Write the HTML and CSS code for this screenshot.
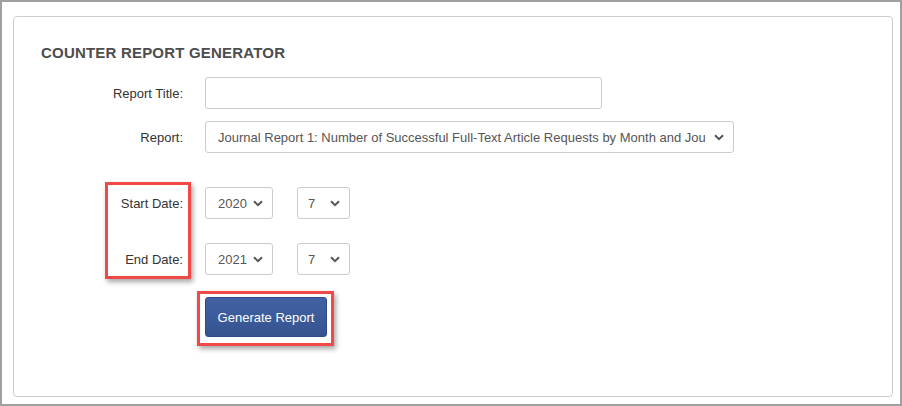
FILE: index.html
```html
<!DOCTYPE html>
<html>
<head>
    <meta charset="UTF-8">
    <title>Counter Report Generator</title>
    <link rel="stylesheet" href="styles.css">
</head>
<body>
    <div class="frame">
        <div class="card">
            <h2 class="title">COUNTER REPORT GENERATOR</h2>
            <form class="form">
                <div class="row">
                    <label class="label" for="title">Report Title:</label>
                    <input class="text-input" type="text" id="title">
                </div>
                <div class="row">
                    <label class="label" for="report">Report:</label>
                    <select class="select report-select" id="report">
                        <option>Journal Report 1: Number of Successful Full-Text Article Requests by Month and Journal</option>
                    </select>
                </div>
                <div class="row row-start">
                    <label class="label">Start Date:</label>
                    <div class="date-pair">
                        <select class="select year-select"><option>2020</option></select>
                        <select class="select month-select"><option>7</option></select>
                    </div>
                </div>
                <div class="row row-end">
                    <label class="label">End Date:</label>
                    <div class="date-pair">
                        <select class="select year-select"><option>2021</option></select>
                        <select class="select month-select"><option>7</option></select>
                    </div>
                </div>
                <div class="row row-button">
                    <span></span>
                    <button type="button" class="btn">Generate Report</button>
                </div>
            </form>
            <!-- annotation boxes drawn over the form -->
            <div class="mark mark-labels"></div>
            <div class="mark mark-button"></div>
        </div>
    </div>
</body>
</html>
```

FILE: styles.css
```css
html, body {
    margin: 0;
    padding: 0;
    background: #ffffff;
}
body {
    font-family: "Liberation Sans", Arial, sans-serif;
    font-size: 13px;
    color: #333333;
}
.frame {
    width: 902px;
    height: 406px;
    box-sizing: border-box;
    border: 2px solid #a0a0a0;
    padding: 14px 0 0 11px;
}
.card {
    position: relative;
    width: 880px;
    height: 381px;
    box-sizing: border-box;
    border: 1px solid #cccccc;
    border-radius: 4px;
    padding: 27px 27px 0 27px;
}
.title {
    margin: 0;
    font-size: 15px;
    line-height: 17px;
    font-weight: bold;
    color: #4d4d4d;
    letter-spacing: 0.2px;
}
.form {
    display: flex;
    flex-direction: column;
    margin-top: 16px;
}
.row {
    display: grid;
    grid-template-columns: 142px auto;
    column-gap: 22px;
    align-items: center;
    justify-items: start;
}
.row + .row {
    margin-top: 12px;
}
.row.row-start {
    margin-top: 34px;
}
.row.row-end {
    margin-top: 24px;
}
.row.row-button {
    margin-top: 22px;
}
.label {
    justify-self: end;
    color: #333333;
}
.text-input {
    width: 397px;
    height: 32px;
    box-sizing: border-box;
    border: 1px solid #cccccc;
    border-radius: 3px;
    padding: 0 12px;
    font-family: inherit;
    font-size: 13px;
}
.select {
    height: 32px;
    box-sizing: border-box;
    border: 1px solid #cccccc;
    border-radius: 3px;
    padding: 0 24px 0 12px;
    font-family: inherit;
    font-size: 13px;
    color: #555555;
    background-color: #ffffff;
    background-image: url("data:image/svg+xml;utf8,<svg xmlns='http://www.w3.org/2000/svg' width='10' height='7' viewBox='0 0 10 7'><path d='M1 1.2 L5 5.2 L9 1.2' fill='none' stroke='%23555555' stroke-width='2'/></svg>");
    background-repeat: no-repeat;
    background-position: right 9px center;
    -webkit-appearance: none;
    appearance: none;
}
.report-select {
    width: 529px;
    padding-right: 28px;
}
.date-pair {
    display: flex;
    gap: 24px;
}
.year-select {
    width: 68px;
}
.month-select {
    width: 53px;
    padding-left: 10px;
}
.btn {
    width: 122px;
    height: 40px;
    border: 1px solid #2f4a84;
    border-radius: 3px;
    background: linear-gradient(#4262a4, #36538f);
    color: #ffffff;
    font-family: inherit;
    font-size: 13px;
    padding: 0;
}
.mark {
    position: absolute;
    box-sizing: border-box;
    border: 3px solid #f24848;
    box-shadow: 2px 3px 5px rgba(0, 0, 0, 0.35);
}
.mark-labels {
    left: 91px;
    top: 165px;
    width: 86px;
    height: 97px;
}
.mark-button {
    left: 183px;
    top: 274px;
    width: 137px;
    height: 55px;
}
```
